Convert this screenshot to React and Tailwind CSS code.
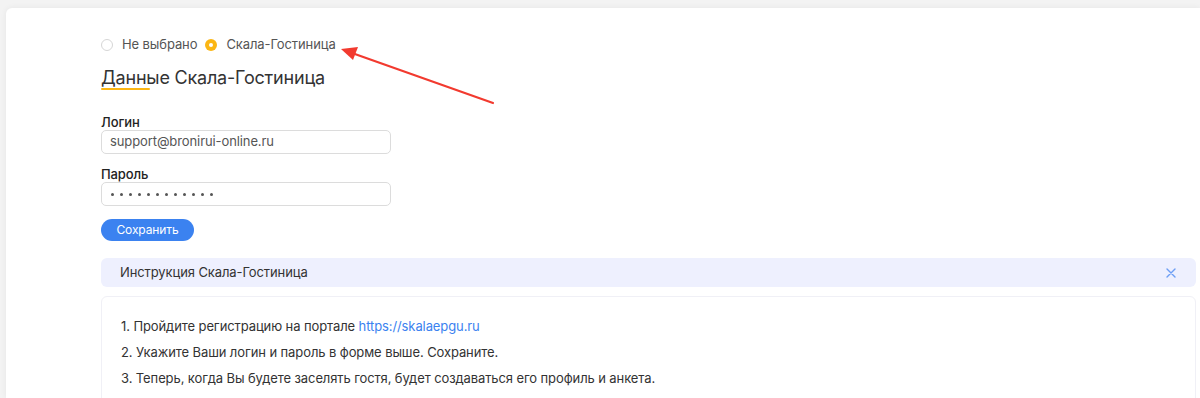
import React from "react";

const Radio = ({ checked, label }) => (
  <label className="flex items-center gap-[9px] cursor-pointer">
    {checked ? (
      <span className="w-[12px] h-[12px] rounded-full bg-[#fbb614] flex items-center justify-center">
        <span className="w-[4px] h-[4px] rounded-full bg-white"></span>
      </span>
    ) : (
      <span className="w-[12px] h-[12px] rounded-full border border-[#d6d6d6] bg-white"></span>
    )}
    <span>{label}</span>
  </label>
);

const Field = ({ label, children }) => (
  <div className="flex flex-col">
    <span className="text-[13px] font-medium text-[#222] leading-[14px] mb-[1px]">{label}</span>
    {children}
  </div>
);

const App = () => {
  return (
    <div className="relative w-[1200px] h-[398px] overflow-hidden bg-[#f3f3f3] font-['Inter',sans-serif] tracking-[-0.1px]">
      <div className="absolute left-[6px] top-[8px] right-0 bottom-0 bg-white rounded-tl-[6px] shadow-[0_0_6px_rgba(0,0,0,0.06)]"></div>
      <div className="relative pl-[101px] pr-[4px] pt-[37px]">
        <div className="flex items-center gap-[8px] text-[13px] text-[#555] h-[16px]">
          <Radio label="Не выбрано" />
          <Radio checked label="Скала-Гостиница" />
        </div>

        <div className="mt-[13px] relative inline-block">
          <h2 className="text-[18px] text-[#333] leading-[24px] tracking-[-0.2px]">Данные Скала-Гостиница</h2>
          <span className="absolute left-0 top-[22px] w-[49px] h-[2px] bg-[#fbb614] rounded"></span>
        </div>

        <div className="mt-[25px] flex flex-col gap-[13px] w-[290px]">
          <Field label="Логин">
            <div className="h-[24px] rounded-[5px] border border-[#dcdcdc] px-[8px] flex items-center text-[13px] text-[#555]">
              support@bronirui-online.ru
            </div>
          </Field>
          <Field label="Пароль">
            <div className="h-[24px] rounded-[5px] border border-[#dcdcdc] px-[9px] flex items-center gap-[6px]">
              {Array.from({ length: 12 }).map((_, i) => (
                <span key={i} className="w-[3px] h-[3px] rounded-full bg-[#555]"></span>
              ))}
            </div>
          </Field>
        </div>

        <button className="mt-[13px] w-[93px] h-[22px] rounded-full bg-[#3b82f0] text-white text-[12px] flex items-center justify-center">
          Сохранить
        </button>

        <div className="mt-[17px] h-[29px] rounded-[6px] bg-[#eef0fe] flex items-center justify-between pl-[19px] pr-[20px] text-[13px] text-[#333]">
          <span>Инструкция Скала-Гостиница</span>
          <svg width="10" height="10" viewBox="0 0 10 10" className="text-[#6c9ef5]">
            <path d="M1 1 L9 9 M9 1 L1 9" stroke="currentColor" strokeWidth="1.4" strokeLinecap="round" />
          </svg>
        </div>

        <div className="mt-[9px] h-[200px] rounded-[6px] border border-[#f0f0f6] pl-[19px] pt-[20px] text-[13px] text-[#333] flex flex-col gap-[8px] leading-[18px]">
          <p>
            1. Пройдите регистрацию на портале{" "}
            <a className="text-[#3b82f0]" href="#">https://skalaepgu.ru</a>
          </p>
          <p>2. Укажите Ваши логин и пароль в форме выше. Сохраните.</p>
          <p>3. Теперь, когда Вы будете заселять гостя, будет создаваться его профиль и анкета.</p>
        </div>
      </div>

      <svg className="absolute left-0 top-0 pointer-events-none" width="1200" height="398">
        <line x1="493" y1="103" x2="352" y2="53" stroke="#f23a2f" strokeWidth="2.2" strokeLinecap="round" />
        <path d="M341 49 L358 47 L353 60 Z" fill="#f23a2f" />
      </svg>
    </div>
  );
};

export default App;
